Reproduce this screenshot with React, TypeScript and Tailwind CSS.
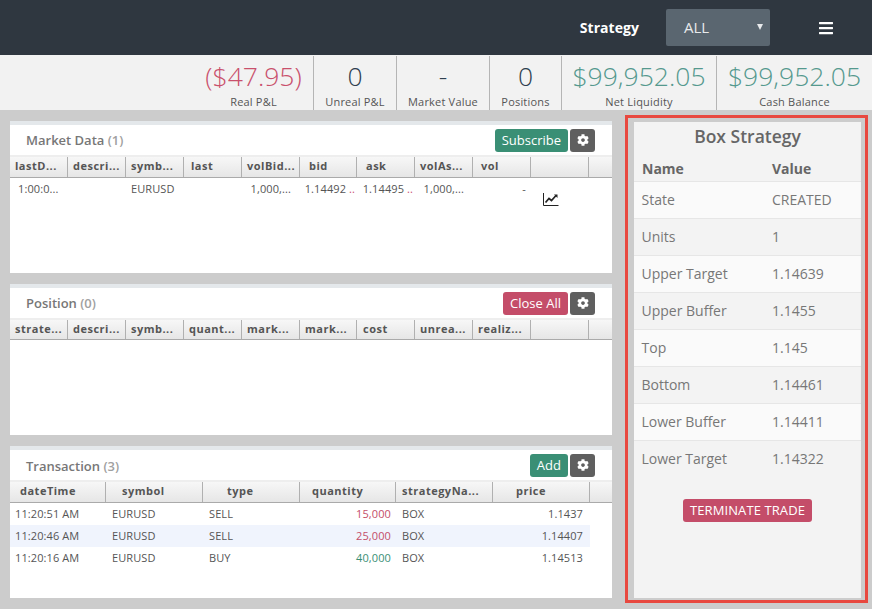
import { FaBars, FaCog } from "react-icons/fa"

type Col = { label: string; width: number; align?: string }

const marketCols: Col[] = [
  { label: "lastD...", width: 58 },
  { label: "descri...", width: 58 },
  { label: "symb...", width: 58 },
  { label: "last", width: 58, align: "pl-[7px]" },
  { label: "volBid...", width: 58 },
  { label: "bid", width: 57, align: "pl-[9px]" },
  { label: "ask", width: 58, align: "pl-[9px]" },
  { label: "volAs...", width: 58 },
  { label: "vol", width: 58, align: "pl-2" },
  { label: "", width: 58 },
]

const positionCols: Col[] = [
  { label: "strate...", width: 58 },
  { label: "descri...", width: 58 },
  { label: "symb...", width: 58 },
  { label: "quant...", width: 58 },
  { label: "mark...", width: 58 },
  { label: "mark...", width: 57 },
  { label: "cost", width: 58, align: "pl-[6px]" },
  { label: "unrea...", width: 58 },
  { label: "realiz...", width: 58 },
  { label: "", width: 58 },
]

const txCols: Col[] = [
  { label: "dateTime", width: 96, align: "pl-[10px]" },
  { label: "symbol", width: 97, align: "pl-4" },
  { label: "type", width: 97, align: "pl-6" },
  { label: "quantity", width: 96, align: "pl-3" },
  { label: "strategyNa...", width: 97, align: "pl-[6px]" },
  { label: "price", width: 97, align: "pl-[23px]" },
]

const transactions = [
  { time: "11:20:51 AM", type: "SELL", qty: "15,000", price: "1.1437", up: false },
  { time: "11:20:46 AM", type: "SELL", qty: "25,000", price: "1.14407", up: false },
  { time: "11:20:16 AM", type: "BUY", qty: "40,000", price: "1.14513", up: true },
]

const strategyRows = [
  ["State", "CREATED"],
  ["Units", "1"],
  ["Upper Target", "1.14639"],
  ["Upper Buffer", "1.1455"],
  ["Top", "1.145"],
  ["Bottom", "1.14461"],
  ["Lower Buffer", "1.14411"],
  ["Lower Target", "1.14322"],
]

function Stat({ value, label, color, width }: { value: string; label: string; color: string; width: string }) {
  return (
    <div className={`flex flex-col items-center border-r border-[#b5b5b5] last:border-r-0 h-[54px] mt-px ${width}`}>
      <div className={`text-[26.5px] leading-[36px] font-light mt-[2px] mb-px whitespace-nowrap ${color}`}>{value}</div>
      <div className="text-[11px] leading-[14px] tracking-[0.2px] text-[#555] whitespace-nowrap">{label}</div>
    </div>
  )
}

function GridHeader({ cols, height = "h-[23px]" }: { cols: Col[]; height?: string }) {
  return (
    <div className={`flex bg-gradient-to-b from-[#f7f7f7] to-[#e6e6e6] border-b border-[#aaaaaa] border-t-2 border-t-[#eeeeee] ${height}`}>
      {cols.map((c, i) => (
        <div
          key={i}
          style={{ width: c.width }}
          className={`shrink-0 border-r border-[#b0b0b0] text-[11px] leading-[18px] font-bold text-[#555] tracking-[0.5px] whitespace-nowrap overflow-hidden ${c.align ?? "pl-[5px]"}`}
        >
          {c.label}
        </div>
      ))}
    </div>
  )
}

function PanelTitle({ title, count, offset, children }: { title: string; count: number; offset: string; children: React.ReactNode }) {
  return (
    <div className="flex items-center justify-between h-[30px] pl-4 pr-[17px]">
      <div className={`text-[13px] font-semibold text-[#777] ${offset}`}>
        {title} <span className="text-[#a0a0a0]">({count})</span>
      </div>
      <div className="flex gap-[2px]">{children}</div>
    </div>
  )
}

function ActionButton({ label, color }: { label: string; color: string }) {
  return (
    <button className={`h-[23px] px-[7px] rounded-[3px] text-white text-[13px] leading-[23px] ${color}`}>{label}</button>
  )
}

function GearButton() {
  return (
    <button className="h-[23px] w-[25px] rounded-[3px] bg-[#5f5f5f] text-white flex items-center justify-center">
      <FaCog size={12} />
    </button>
  )
}

function Panel({ height, children }: { height: string; children: React.ReactNode }) {
  return <section className={`bg-white border-t-4 border-[#e4e8eb] ${height}`}>{children}</section>
}

function ChartIcon() {
  return (
    <svg width="16" height="13" viewBox="0 0 16 13" fill="none" className="text-[#222]">
      <path d="M0.5 0V12.5H15.5" stroke="currentColor" strokeWidth="1" />
      <path d="M2.5 9.5L6 5.5L8.5 7.5L13 2.5" stroke="currentColor" strokeWidth="1.7" />
      <path d="M11 1.5H14.5V5" fill="currentColor" />
    </svg>
  )
}

export default function App() {
  return (
    <div className="w-[872px] h-[609px] bg-[#cccccc] overflow-hidden font-['Open_Sans',sans-serif]">
      <header className="h-[55px] bg-[#2f3740] flex items-center justify-end">
        <span className="text-white text-[14px] tracking-[0.05px] font-bold mr-[27px]">Strategy</span>
        <div className="relative w-[104px] h-[37px] mb-[1px] rounded-[2px] bg-[#5a6670] text-[#e8eaec] text-[15px] leading-[37px] pl-[18px]">
          ALL
          <span className="absolute right-[7px] top-[15px] w-0 h-0 border-x-[3px] border-x-transparent border-t-[6px] border-t-[#e8eaec]" />
        </div>
        <FaBars className="text-white ml-[49px] mr-[39px] w-[14px] h-[16px] shrink-0" />
      </header>

      <div className="h-[55px] bg-[#f2f2f2] flex justify-end">
        <Stat value="($47.95)" label="Real P&L" color="text-[#c9506c]" width="w-[120px]" />
        <Stat value="0" label="Unreal P&L" color="text-[#2f3f4f]" width="w-[83px]" />
        <Stat value="-" label="Market Value" color="text-[#2f3f4f]" width="w-[93px]" />
        <Stat value="0" label="Positions" color="text-[#2f3f4f]" width="w-[72px]" />
        <Stat value="$99,952.05" label="Net Liquidity" color="text-[#55998e]" width="w-[155px]" />
        <Stat value="$99,952.05" label="Cash Balance" color="text-[#55998e]" width="w-[155px]" />
      </div>

      <div className="flex">
        <div className="w-[602px] ml-[10px] mt-[11px] flex flex-col gap-[11px]">
          <Panel height="h-[152px]">
            <PanelTitle title="Market Data" count={1} offset="mt-[2px]">
              <ActionButton label="Subscribe" color="bg-[#3a8f75]" />
              <GearButton />
            </PanelTitle>
            <GridHeader cols={marketCols} />
            <div className="relative h-[22px] text-[11px] leading-[21px] tracking-[0.1px] text-[#555] flex">
              <div className="w-[58px] pl-2">1:00:0...</div>
              <div className="w-[58px]" />
              <div className="w-[58px] pl-[5px]">EURUSD</div>
              <div className="w-[58px]" />
              <div className="w-[58px] text-right pr-[9px]">1,000,...</div>
              <div className="w-[57px] text-right pr-[2px] whitespace-nowrap">
                1.14492 <span className="text-[#c9506c]">..</span>
              </div>
              <div className="w-[58px] text-right pr-[2px] whitespace-nowrap">
                1.14495 <span className="text-[#c9506c]">..</span>
              </div>
              <div className="w-[58px] text-right pr-[9px]">1,000,...</div>
              <div className="w-[53px] text-right">-</div>
              <div className="pl-[17px] pt-[15px]">
                <ChartIcon />
              </div>
            </div>
          </Panel>

          <Panel height="h-[151px]">
            <PanelTitle title="Position" count={0} offset="mt-[2px]">
              <ActionButton label="Close All" color="bg-[#c44d69]" />
              <GearButton />
            </PanelTitle>
            <GridHeader cols={positionCols} height="h-[22px]" />
          </Panel>

          <Panel height="h-[152px]">
            <PanelTitle title="Transaction" count={3} offset="mt-[4px]">
              <ActionButton label="Add" color="bg-[#3a8f75]" />
              <GearButton />
            </PanelTitle>
            <GridHeader cols={txCols} />
            <div className="w-[580px] text-[11px] tracking-[0.1px] text-[#555]">
              {transactions.map((t, i) => (
                <div key={t.time} className={`flex h-[22px] leading-[22px] ${i === 1 ? "bg-[#f0f4fd]" : ""}`}>
                  <div className="w-[96px] pl-[5px]">{t.time}</div>
                  <div className="w-[97px] pl-[6px]">EURUSD</div>
                  <div className="w-[97px] pl-[6px]">{t.type}</div>
                  <div className={`w-[96px] text-right pr-[5px] ${t.up ? "text-[#3a8f75]" : "text-[#c44d69]"}`}>{t.qty}</div>
                  <div className="w-[97px] pl-[6px]">BOX</div>
                  <div className="w-[97px] text-right pr-[7px]">{t.price}</div>
                </div>
              ))}
            </div>
          </Panel>
        </div>

        <aside className="w-[243px] h-[488px] ml-[13px] mt-[5px] border-[3px] border-[#e8483f] pl-[6px] pr-[4px] pt-[4px]">
          <div className="bg-[#f3f3f3] h-[476px]">
            <h2 className="text-center text-[17.5px] leading-[28px] mb-[2px] font-semibold text-[#666]">Box Strategy</h2>
            <div className="flex h-[30px] items-center border-b border-[#e6e6e6] text-[14px] font-bold text-[#666] px-2 pt-[3px]">
              <div className="w-[130px]">Name</div>
              <div>Value</div>
            </div>
            {strategyRows.map(([name, value], i) => (
              <div
                key={name}
                className={`flex items-center h-[37px] pl-[7.5px] pb-[2px] text-[14px] text-[#777] ${i < 7 ? "border-b border-[#e6e6e6]" : ""} ${i % 2 === 0 && i < 7 ? "bg-[#fafafa]" : ""}`}
              >
                <div className="w-[130.5px]">{name}</div>
                <div>{value}</div>
              </div>
            ))}
            <div className="flex justify-center mt-[21px]">
              <button className="h-[23px] w-[129px] rounded-[3px] bg-[#c44d69] text-white text-[13px] font-medium tracking-[0.1px] leading-[23px] whitespace-nowrap">
                TERMINATE TRADE
              </button>
            </div>
          </div>
        </aside>
      </div>
    </div>
  )
}
